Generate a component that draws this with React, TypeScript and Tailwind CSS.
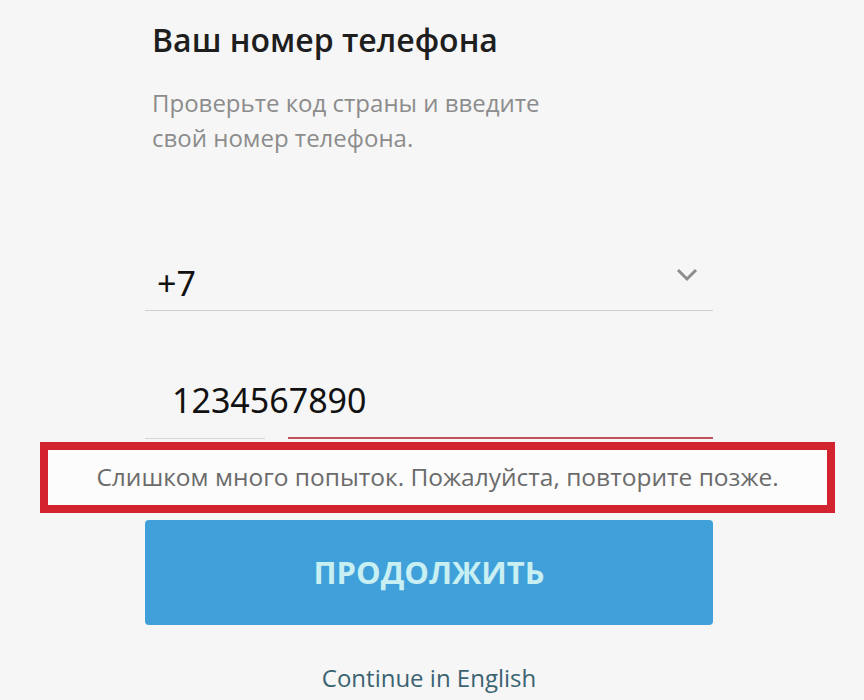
import React from "react";

export default function App() {
  return (
    <div className="w-[864px] h-[700px] bg-[#f6f6f6] overflow-hidden font-['Open_Sans',sans-serif]">
      <div className="ml-[145px] w-[568px] flex flex-col">
        <h1 className="mt-[20px] pl-[7px] text-[32px] leading-[40px] font-semibold text-[#1e1e1e]">
          Ваш номер телефона
        </h1>
        <p className="mt-[25px] pl-[7px] w-[410px] text-[24px] leading-[35px] text-[#8c8c8c]">
          Проверьте код страны и введите свой номер телефона.
        </p>

        {/* country code */}
        <div className="mt-[100px] flex items-center justify-between border-b border-[#cfcfcf] pl-[12px] pr-[15px] h-[56px]">
          <span className="text-[34px] leading-none text-[#111] font-['Noto_Sans',sans-serif]">+7</span>
          <svg width="22" height="14" viewBox="0 0 22 14" className="self-start mt-[13px]">
            <path d="M2 2 L11 11 L20 2" fill="none" stroke="#8d8d8d" strokeWidth="3" />
          </svg>
        </div>

        {/* phone number */}
        <div className="mt-[72px] h-[54px] flex items-start pl-[27px]">
          <span className="text-[34px] leading-none text-[#111] font-['Noto_Sans',sans-serif]">1234567890</span>
        </div>
        <div className="flex items-center h-[2px]">
          <div className="w-[120px] h-px bg-[#d6d6d6]" />
          <div className="ml-[23px] flex-1 h-[2px] bg-[#c4525c]" />
        </div>
      </div>

      {/* error box */}
      <div className="ml-[40px] mt-[3px] w-[795px] h-[71px] border-[8px] border-[#d2232f] bg-[#fcfcfc] flex items-center justify-center">
        <span className="text-[24.5px] leading-none text-[#6b6b6b]">
          Слишком много попыток. Пожалуйста, повторите позже.
        </span>
      </div>

      <div className="ml-[145px] w-[568px] flex flex-col items-center">
        <button className="mt-[7px] w-full h-[105px] rounded-[4px] bg-[#40a0da] text-[31px] font-bold text-[#c8eff2]">
          ПРОДОЛЖИТЬ
        </button>
        <a className="mt-[37px] text-[24px] leading-[32px] text-[#3b6371]">Continue in English</a>
      </div>
    </div>
  );
}
